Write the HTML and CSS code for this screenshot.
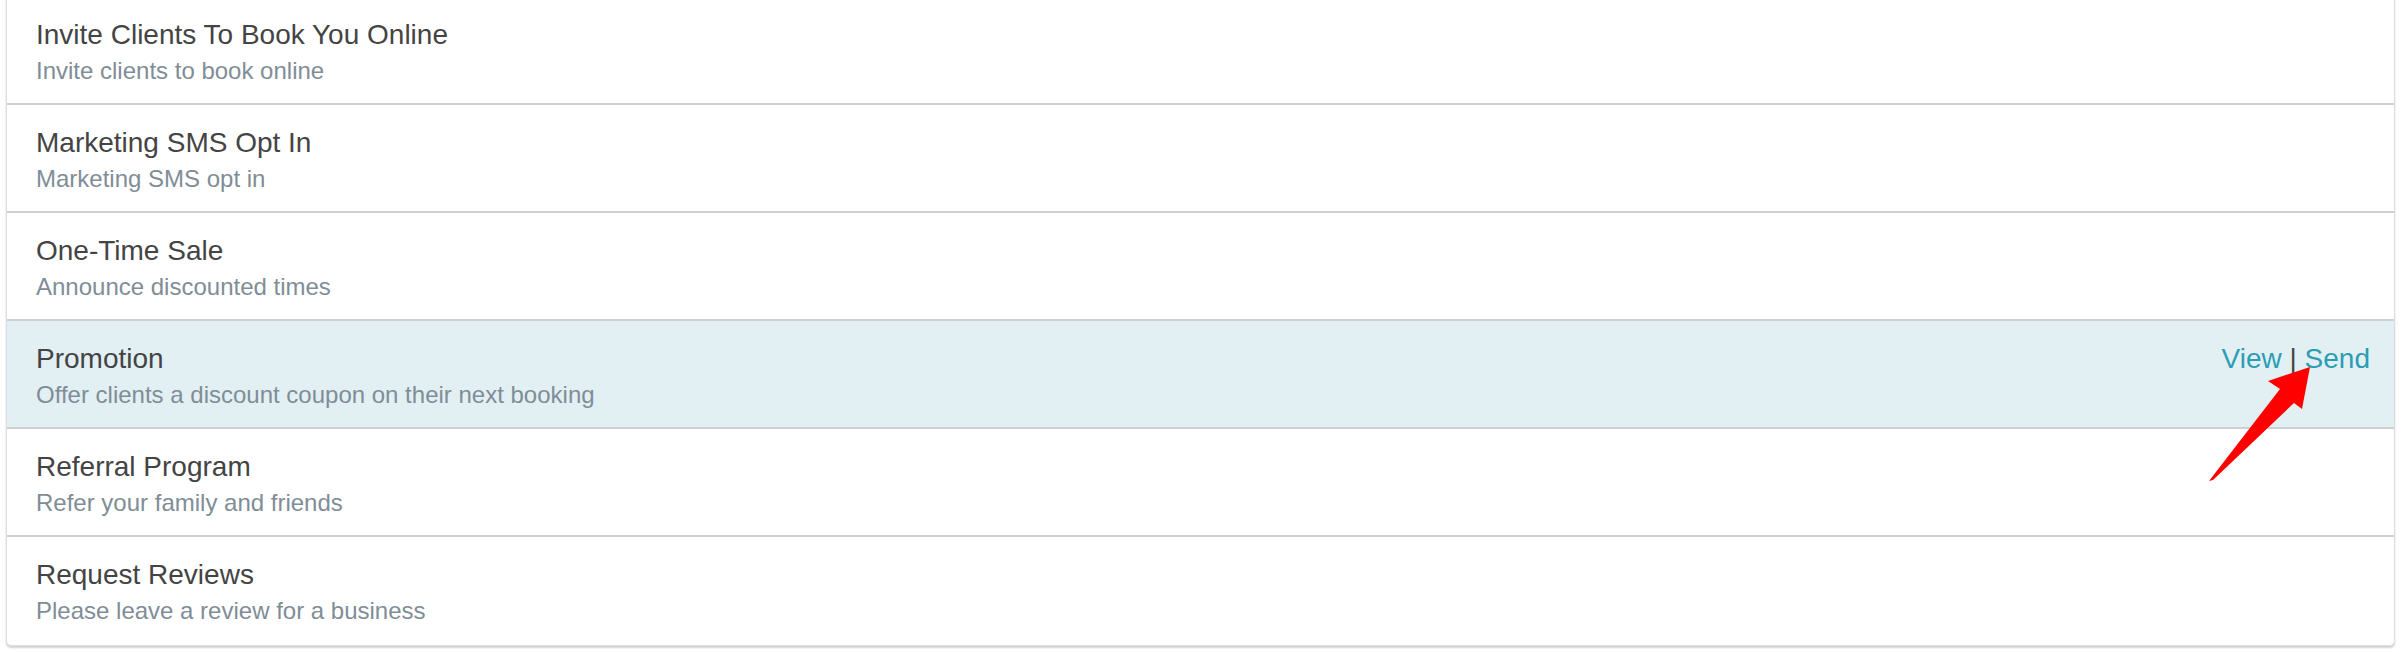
FILE: index.html
```html
<!DOCTYPE html>
<html>
<head>
<meta charset="utf-8">
<link rel="stylesheet" href="styles.css">
</head>
<body>
<div class="card">
  <div class="item">
    <div class="text">
      <div class="title">Invite Clients To Book You Online</div>
      <div class="sub">Invite clients to book online</div>
    </div>
  </div>
  <div class="item">
    <div class="text">
      <div class="title">Marketing SMS Opt In</div>
      <div class="sub">Marketing SMS opt in</div>
    </div>
  </div>
  <div class="item">
    <div class="text">
      <div class="title">One-Time Sale</div>
      <div class="sub">Announce discounted times</div>
    </div>
  </div>
  <div class="item active">
    <div class="text">
      <div class="title">Promotion</div>
      <div class="sub">Offer clients a discount coupon on their next booking</div>
    </div>
    <div class="actions"><a class="link">View</a> <span class="sep">|</span> <a class="link">Send</a></div>
  </div>
  <div class="item">
    <div class="text">
      <div class="title">Referral Program</div>
      <div class="sub">Refer your family and friends</div>
    </div>
  </div>
  <div class="item last">
    <div class="text">
      <div class="title">Request Reviews</div>
      <div class="sub">Please leave a review for a business</div>
    </div>
  </div>
</div>
<svg class="arrow" width="2406" height="652" viewBox="0 0 2406 652">
  <polygon points="2310,367 2268,381 2280,389 2209,481 2213,480 2294,403 2302,409" fill="#ff0000"/>
</svg>
</body>
</html>
```
FILE: styles.css
```css
html, body {
  margin: 0;
  padding: 0;
  background: #ffffff;
  overflow: hidden;
}
body {
  width: 2406px;
  height: 652px;
  position: relative;
  font-family: "Liberation Sans", Arial, sans-serif;
}
.card {
  margin: -4px 11px 0 6px;
  border: 1.5px solid #dedede;
  border-radius: 0 0 5px 5px;
  background: #fff;
  box-shadow: 0 1.5px 2px rgba(0, 0, 0, 0.18);
}
.item {
  display: flex;
  justify-content: space-between;
  align-items: flex-start;
  padding: 20px 24px 17px 29px;
  border-bottom: 2px solid #cfcfcf;
}
.item.last {
  border-bottom: none;
  padding-bottom: 19px;
}
.item.active {
  background: #e2f0f4;
}
.title {
  font-size: 28px;
  line-height: 36px;
  color: #444444;
}
.sub {
  margin-top: 3px;
  font-size: 24px;
  line-height: 30px;
  color: #7f8d97;
}
.actions {
  font-size: 28px;
  line-height: 36px;
  color: #444;
}
.link {
  color: #2c9db4;
  text-decoration: none;
}
.sep {
  color: #444444;
}
.arrow {
  position: absolute;
  left: 0;
  top: 0;
  pointer-events: none;
}
```
